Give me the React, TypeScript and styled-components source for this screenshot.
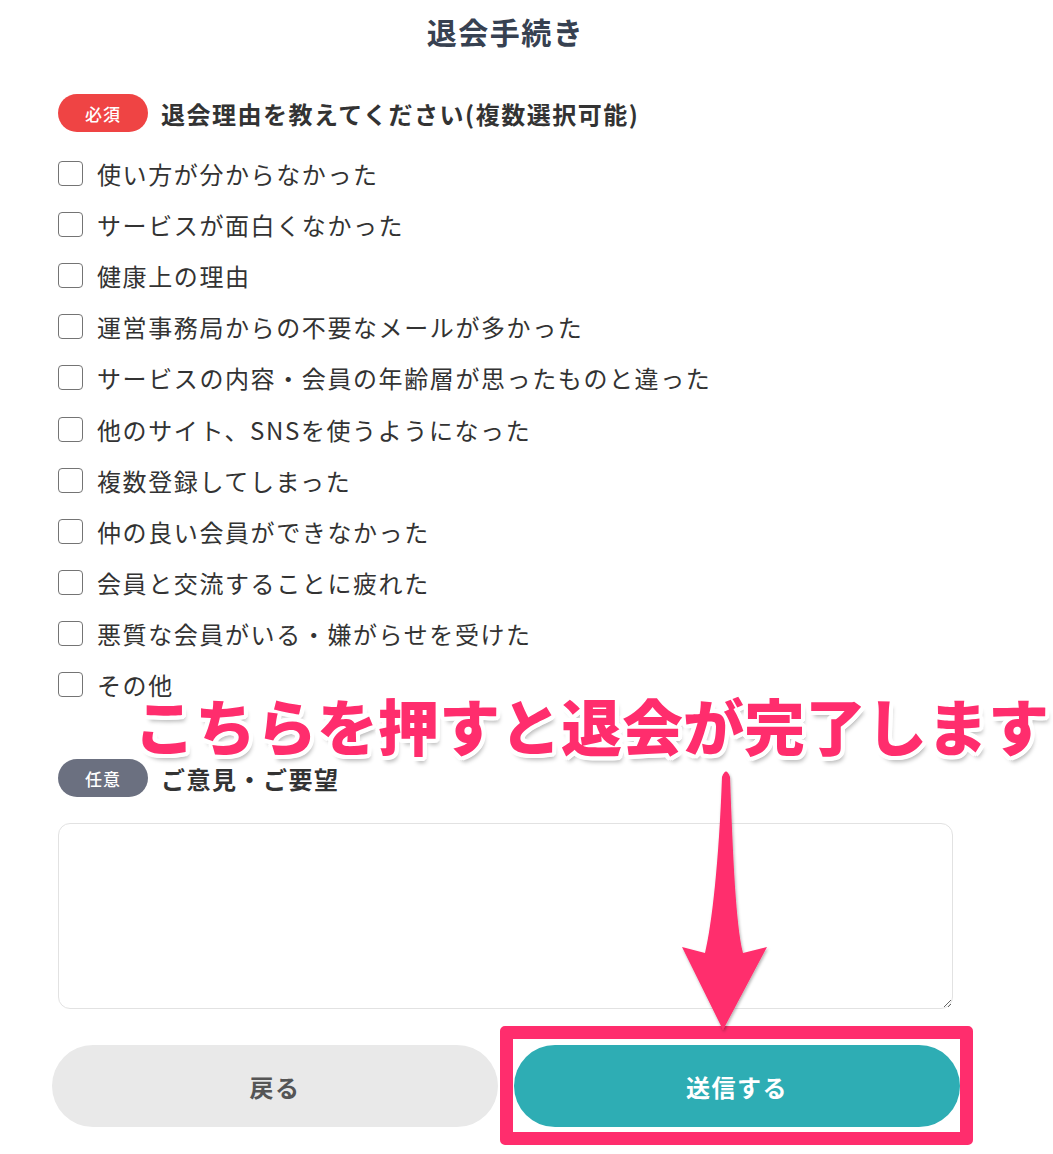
import React from 'react';
import styled, { createGlobalStyle } from 'styled-components';

const GlobalStyle = createGlobalStyle`
  body {
    margin: 0;
    background: #fff;
    font-family: 'Noto Sans CJK JP', 'Noto Sans', sans-serif;
    color: #333;
  }
`;

const Page = styled.div`
  position: relative;
  width: 1053px;
  height: 1154px;
  overflow: hidden;
`;

const Form = styled.form`
  display: flex;
  flex-direction: column;
  width: 895px;
  margin-left: 58px;
`;

const Title = styled.h1`
  margin: 0;
  height: 62px;
  line-height: 62px;
  text-align: center;
  font-size: 30px;
  font-weight: 700;
  letter-spacing: 1.5px;
  color: #374151;
`;

const SectionHead = styled.div<{ $top: number }>`
  display: flex;
  align-items: center;
  gap: 13px;
  margin-top: ${({ $top }) => $top}px;
`;

const Badge = styled.span<{ $required?: boolean }>`
  display: flex;
  align-items: center;
  justify-content: center;
  width: 90px;
  height: 38px;
  border-radius: 19px;
  background: ${({ $required }) => ($required ? '#ef4444' : '#6b7080')};
  color: #fff;
  font-size: 17px;
  font-weight: 500;
  letter-spacing: 1px;
`;

const Label = styled.span`
  font-size: 24px;
  font-weight: 700;
  letter-spacing: 1.5px;
  color: #333;
`;

const Options = styled.div`
  display: flex;
  flex-direction: column;
  margin-top: 16px;
`;

const Option = styled.label`
  display: flex;
  align-items: center;
  gap: 14px;
  height: 51.1px;
  font-size: 24px;
  letter-spacing: 1.6px;
  color: #333;
`;

const Check = styled.input`
  appearance: none;
  margin: 0;
  width: 25px;
  height: 25px;
  border: 1.5px solid #747474;
  border-radius: 4px;
  background: #fff;
`;

const Comment = styled.textarea`
  box-sizing: border-box;
  margin-top: 26px;
  width: 895px;
  height: 186px;
  border: 1px solid #e2e2e2;
  border-radius: 12px;
  padding: 12px;
  font-size: 20px;
  font-family: inherit;
  outline: none;
`;

const Buttons = styled.div`
  display: grid;
  grid-template-columns: 1fr 1fr;
  gap: 16px;
  margin: 36px -7px 0 -6px;
`;

const Button = styled.button<{ $primary?: boolean }>`
  height: 82px;
  border: none;
  border-radius: 41px;
  background: ${({ $primary }) => ($primary ? '#2eadb4' : '#e9e9e9')};
  color: ${({ $primary }) => ($primary ? '#fff' : '#555')};
  font-family: inherit;
  font-size: 24px;
  font-weight: 700;
  letter-spacing: 1.5px;
`;

/* callout drawn on top of the form */
const Callout = styled.div`
  position: absolute;
  left: 134px;
  top: 683px;
  font-size: 61px;
  line-height: 84px;
  font-weight: 900;
  white-space: nowrap;
  color: #ff2d6d;
  text-shadow:
    4px 0 0 #fff, -4px 0 0 #fff, 0 4px 0 #fff, 0 -4px 0 #fff,
    3px 3px 0 #fff, -3px 3px 0 #fff, 3px -3px 0 #fff, -3px -3px 0 #fff,
    2px 4px 0 #fff, -2px 4px 0 #fff, 4px 2px 0 #fff, -4px 2px 0 #fff,
    2px -4px 0 #fff, -2px -4px 0 #fff, 4px -2px 0 #fff, -4px -2px 0 #fff,
    3px 6px 4px rgba(0, 0, 0, 0.28);
`;

const Frame = styled.div`
  position: absolute;
  left: 500px;
  top: 1026px;
  width: 473px;
  height: 119px;
  box-sizing: border-box;
  border: 13px solid #ff2d6d;
  border-radius: 5px;
`;

const Arrow = styled.svg`
  position: absolute;
  left: 670px;
  top: 760px;
  width: 110px;
  height: 280px;
  overflow: visible;
`;

const reasons = [
  '使い方が分からなかった',
  'サービスが面白くなかった',
  '健康上の理由',
  '運営事務局からの不要なメールが多かった',
  'サービスの内容・会員の年齢層が思ったものと違った',
  '他のサイト、SNSを使うようになった',
  '複数登録してしまった',
  '仲の良い会員ができなかった',
  '会員と交流することに疲れた',
  '悪質な会員がいる・嫌がらせを受けた',
  'その他',
];

const App = () => {
  return (
    <Page>
      <GlobalStyle />
      <Form onSubmit={(e) => e.preventDefault()}>
        <Title>退会手続き</Title>

        <SectionHead $top={32}>
          <Badge $required>必須</Badge>
          <Label>退会理由を教えてください(複数選択可能)</Label>
        </SectionHead>
        <Options>
          {reasons.map((r) => (
            <Option key={r}>
              <Check type="checkbox" />
              {r}
            </Option>
          ))}
        </Options>

        <SectionHead $top={49}>
          <Badge>任意</Badge>
          <Label>ご意見・ご要望</Label>
        </SectionHead>
        <Comment />

        <Buttons>
          <Button type="button">戻る</Button>
          <Button type="submit" $primary>
            送信する
          </Button>
        </Buttons>
      </Form>

      <Frame />
      <Arrow viewBox="670 760 110 280">
        <defs>
          <filter id="arrowShadow" x="-20%" y="-10%" width="140%" height="120%">
            <feDropShadow dx="1" dy="2" stdDeviation="1.5" floodColor="#000" floodOpacity="0.3" />
          </filter>
        </defs>
        <path
          d="M722,777 Q726,766 730,777 C733,860 736,925 743,953 L767,947 L723,1030 L682,947 L705,953 C712,925 719,860 722,777 Z"
          fill="#ff2d6d"
          filter="url(#arrowShadow)"
        />
      </Arrow>
      <Callout>こちらを押すと退会が完了します</Callout>
    </Page>
  );
};

export default App;
